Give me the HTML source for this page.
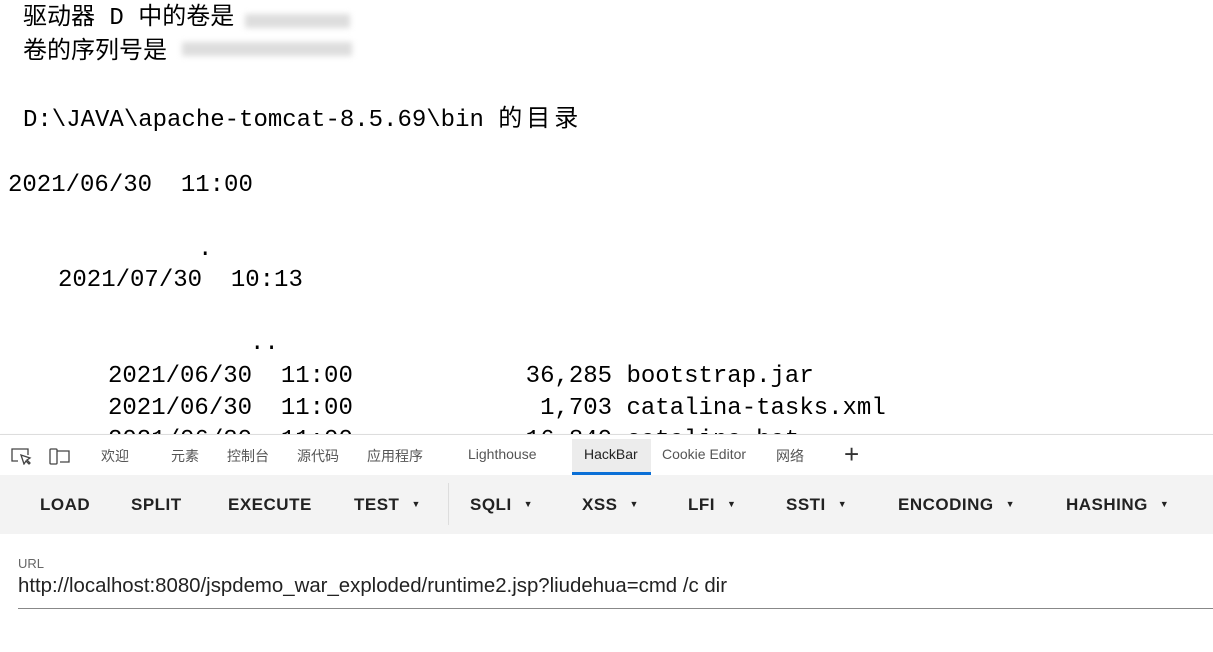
<html><head><style>
body{margin:0;width:1213px;height:652px;overflow:hidden;background:#fff;position:relative;font-family:"Liberation Mono","Noto Sans CJK SC",monospace;}
.l{position:absolute;font-size:24px;line-height:32px;white-space:pre;color:#000;font-family:"Liberation Mono","Noto Sans CJK SC",monospace;}
.blur{position:absolute;background:#ccc;filter:blur(3px);}
.dt{position:absolute;left:0;top:434px;width:1213px;height:40px;background:#fff;border-top:1px solid #ddd;box-shadow:0 1px 2px rgba(0,0,0,.12);font-family:"Liberation Sans","Noto Sans CJK SC",sans-serif;font-size:14px;color:#555;}
.dt span{position:absolute;top:11px;}
.tb{position:absolute;left:0;top:475px;width:1213px;height:59px;background:#f3f3f3;font-family:"Liberation Sans",sans-serif;font-weight:bold;font-size:17px;letter-spacing:.5px;color:#222;}
.tb span{position:absolute;top:20px;}
.tb i{font-style:normal;font-size:9px;margin-left:12px;vertical-align:3px;}
</style></head><body>
<div class="l" style="left:23px;top:3px">驱动器 D 中的卷是</div>
<div class="blur" style="left:245px;top:14px;width:105px;height:14px;background:#ddd"></div>
<div class="l" style="left:23px;top:37px">卷的序列号是</div>
<div class="blur" style="left:182px;top:42px;width:170px;height:14px;background:#ddd"></div>
<div class="l" style="left:23px;top:105px">D:\JAVA\apache-tomcat-8.5.69\bin <span style="letter-spacing:4px">的目录</span></div>
<div class="l" style="left:8px;top:170px">2021/06/30  11:00</div>
<div class="l" style="left:198px;top:234px">.</div>
<div class="l" style="left:58px;top:265px">2021/07/30  10:13</div>
<div class="l" style="left:250px;top:328px">..</div>
<div class="l" style="left:108px;top:361px">2021/06/30  11:00            36,285 bootstrap.jar</div>
<div class="l" style="left:108px;top:393px">2021/06/30  11:00             1,703 catalina-tasks.xml</div>
<div class="l" style="left:108px;top:425px">2021/06/30  11:00            16,840 catalina.bat</div>
<div class="dt">
<svg style="position:absolute;left:10px;top:12px" width="22" height="18" viewBox="0 0 22 18" fill="none" stroke="#444" stroke-width="1.3"><path d="M8 14H2V2h16v6"/><path d="M11 8l3 9 2-3 3 3 1-1-3-3 3-2z"/></svg>
<svg style="position:absolute;left:48px;top:11px" width="24" height="20" viewBox="0 0 24 20" fill="none" stroke="#444" stroke-width="1.3"><rect x="2" y="3" width="7" height="15" rx="1"/><path d="M9 5h12v11h-9"/></svg>
<span style="left:101px">欢迎</span><span style="left:171px">元素</span><span style="left:227px">控制台</span><span style="left:297px">源代码</span><span style="left:367px">应用程序</span><span style="left:468px">Lighthouse</span>
<div style="position:absolute;left:572px;top:4px;width:79px;height:36px;background:#ececec;border-bottom:3px solid #0a6fd6;box-sizing:border-box"></div>
<span style="left:584px;color:#222">HackBar</span><span style="left:662px">Cookie Editor</span><span style="left:776px">网络</span>
<span style="left:844px;top:4px;font-size:26px;font-weight:300;color:#333">+</span>
</div>
<div class="tb">
<span style="left:40px">LOAD</span><span style="left:131px">SPLIT</span><span style="left:228px">EXECUTE</span><span style="left:354px">TEST<i>▼</i></span>
<div style="position:absolute;left:448px;top:8px;width:1px;height:42px;background:#ddd"></div>
<span style="left:470px">SQLI<i>▼</i></span><span style="left:582px">XSS<i>▼</i></span><span style="left:688px">LFI<i>▼</i></span><span style="left:786px">SSTI<i>▼</i></span><span style="left:898px">ENCODING<i>▼</i></span><span style="left:1066px">HASHING<i>▼</i></span>
</div>
<div style="position:absolute;left:18px;top:556px;font-family:'Liberation Sans',sans-serif;font-size:13px;color:#666">URL</div>
<div style="position:absolute;left:18px;top:575px;font-family:'Liberation Sans',sans-serif;font-size:20.4px;color:#222">http://localhost:8080/jspdemo_war_exploded/runtime2.jsp?liudehua=cmd /c dir</div>
<div style="position:absolute;left:18px;top:608px;width:1195px;height:1px;background:#888"></div>
</body></html>
